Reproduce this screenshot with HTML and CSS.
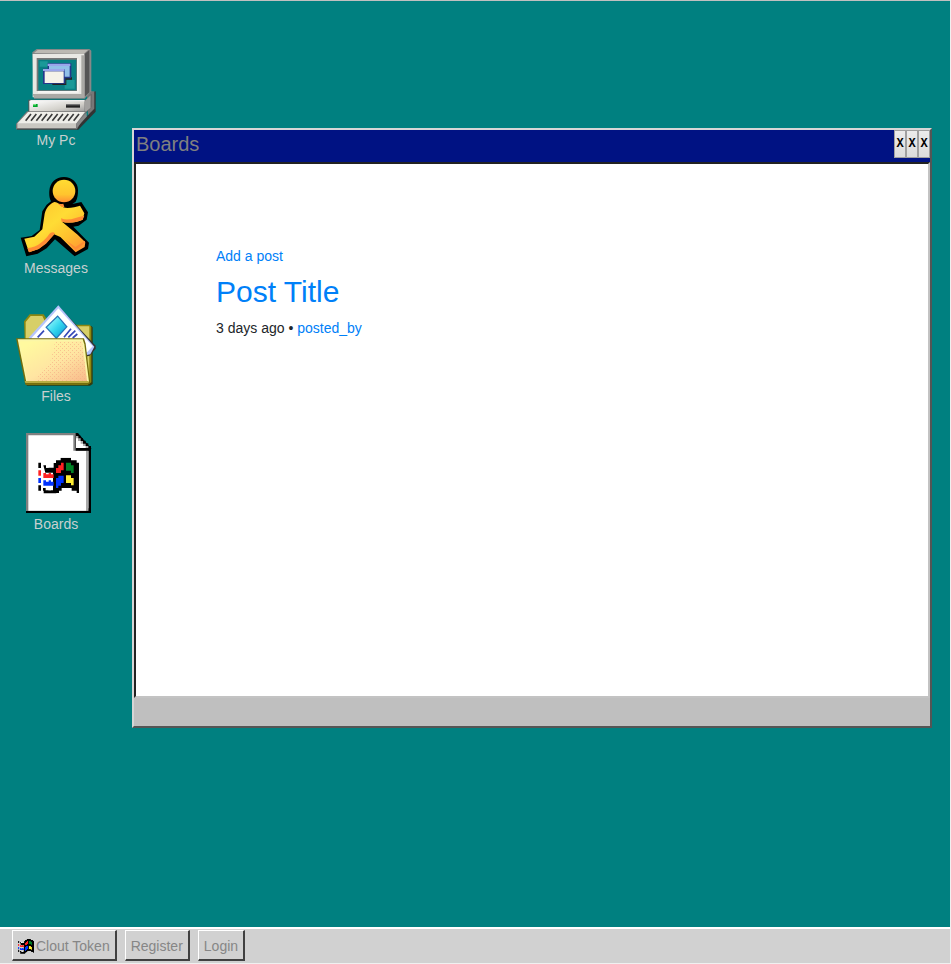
FILE: index.html
```html
<!DOCTYPE html>
<html lang="en">
<head>
<meta charset="utf-8">
<meta name="viewport" content="width=device-width, initial-scale=1">
<title>Boards</title>
<link rel="stylesheet" href="styles.css">
</head>
<body>
<svg class="defs" aria-hidden="true">
  <symbol id="flag" viewBox="90 98 123 107">
    <path fill="#000" d="M91 113h8v16h-8zM91 181h8v16h-8zM106 121h8v7h23v-14h7v-8h14v-8h31v8h17v7h7v91h-7v-7h-15v-8h-30v8h-8v7h-8v7h-38v-14h-2v-8h8v7h22v-53h-23z"/>
    <path fill="#fff" d="M114 121h8v7h-8zM121 189h8v7h-8z"/>
    <path fill="#f22" d="M91 136h8v16h-8zM106 144h8v4h8v-4h7v4h8v11h-31zM144 129h7v-8h8v-8h8v23h-8v8h-15z"/>
    <path fill="#03f" d="M91 159h8v15h-8zM106 166h8v4h8v-4h7v4h8v12h-31zM144 159h7v-7h16v22h-8v8h-8v7h-7z"/>
    <path fill="#008226" d="M174 113h15v8h8v23h-8v-7h-15z"/>
    <path fill="#fe3" d="M174 151h15v8h8v22h-8v-7h-15z"/>
  </symbol>
</svg>

<main class="desktop">
  <nav class="shortcuts" aria-label="Desktop">
    <a class="shortcut" href="#my-pc">
      <svg class="shortcut-icon" viewBox="24 27 240 243" aria-hidden="true">
        <defs>
          <linearGradient id="metal" x2="1" y2="1"><stop offset="0" stop-color="#fff"/><stop offset=".6" stop-color="#d4d2cc"/><stop offset="1" stop-color="#999"/></linearGradient>
        </defs>
        <path fill="#333" d="M245 160l18-6v61l-52 54H27v-7l180-3 37-38z"/>
        <path fill="#777" d="M237 164l8-10h14v52l-19 19z"/>
        <path fill="#888" d="M73 37l13-10h158l6 5v122l-20 22H78z"/>
        <path fill="#bcb9b3" d="M78 39l11-9h151l-13 12z"/>
        <path fill="#555" d="M229 43l15-13v127l-15 14z"/>
        <path fill="#e9e8e4" d="M74 42h155v130H74z"/>
        <path fill="#aaa9a5" d="M74 162h155v11H78zM220 46h9v120h-9z"/>
        <path fill="#777" d="M86 54h121v99H86z"/>
        <path fill="#f6f6f3" d="M207 56h5v102H90v-5h117z"/>
        <path fill="#087f83" d="M91 59h114v92H91z"/>
        <path fill="#1a9998" d="M95 64h24v16H95zM170 120h30v26h-30z"/>
        <path fill="#24378c" d="M119 70h71v46h-18v16h-67V86h14z"/>
        <path fill="#91bfe8" d="M123 78h62v32h-15V88h-47z"/>
        <path fill="#9aa5eb" d="M119 71h68v7h-68zM105 87h64v6h-64z"/>
        <path fill="#f5f2e9" d="M110 94h57v35h-57z"/>
        <path fill="#222" d="M133 131h39v-16h17v-3h3v7h-17v16h-42z"/>
        <path fill="#555" d="M61 179h174l15-17v40l-20 20H61z"/>
        <path fill="url(#metal)" d="M64 182h166v35H64z"/>
        <path fill="#a2a19f" d="M230 183l18-18v38l-18 16z"/>
        <path fill="#eee" d="M67 180h163v4H67z"/>
        <path fill="#00a62a" d="M75 192h14v9H75z"/>
        <path fill="#6ce47e" d="M75 192h9v4h-9z"/>
        <path fill="#222" d="M174 192h42v11h-42z"/>
        <path fill="#777" d="M174 192h42v4h-42z"/>
        <path fill="#777" d="M57 214h180l-30 54H24v-17z"/>
        <path fill="#efeee9" d="M60 216h171l-27 35H27z"/>
        <path fill="#c9c7c1" d="M28 252h176v12H28z"/>
        <path fill="#888" d="M205 251l31-33v12l-30 33z"/>
        <path stroke="#3a3a3a" stroke-width="5" d="M69 222l-16 20M85 222l-16 20M101 222l-16 20M117 222l-16 20M133 222l-16 20M149 222l-16 20M165 222l-16 20M181 222l-16 20M197 222l-16 20M213 222l-16 20"/>
      </svg>
      <span class="shortcut-label">My Pc</span>
    </a>
    <a class="shortcut" href="#messages">
      <svg class="shortcut-icon" viewBox="24 21 240 243" aria-hidden="true">
        <defs>
          <linearGradient id="body" x2="1" y2="1"><stop offset="0" stop-color="#ffc02b"/><stop offset=".45" stop-color="#ffdc35"/><stop offset=".7" stop-color="#ffc02e"/><stop offset="1" stop-color="#ff8e35"/></linearGradient>
          <linearGradient id="head" x2="0" y2="1"><stop offset="0" stop-color="#ffdc32"/><stop offset=".65" stop-color="#ffc52e"/><stop offset="1" stop-color="#ff8f35"/></linearGradient>
        </defs>
        <path fill="#000" d="M168 21c24 0 42 17 42 39 0 13-1 24-7 35l-10 7 27-6 20 31-4 22-24 18-16 3 47 48-3 19-40 22-59-51-25 27-27 16-34 8-17-56 33-5 24-18 8-56 13-20 13-10c-5-9-6-20-5-32 2-24 19-41 44-41z"/>
        <circle cx="168" cy="63" r="34" fill="url(#head)"/>
        <path fill="url(#body)" d="M139 96c13 1 19 11 27 16 16 5 37-2 50-5l13 23-5 19c-20 9-44 11-62 6l47 39 23 23-2 14-27 16-46-46-19-8-24 26-22 18-29 10-14-41 30-6 24-22 7-47c5-18 15-29 29-35z"/>
        <path fill="#ff8c35" d="M58 235c33-4 52-24 66-43 5-6 11-8 17-2l-3 4-24 27-22 16-29 10zM159 145c23 10 47-4 70-8l-5 12c-21 9-44 12-63 6zM202 231l29-19v6l-28 23-31-32zM139 96c7 5 17 7 27 5l3 10h-7c-7-6-13-12-23-15z"/>
      </svg>
      <span class="shortcut-label">Messages</span>
    </a>
    <a class="shortcut" href="#files">
      <svg class="shortcut-icon" viewBox="24 21 240 243" aria-hidden="true">
        <defs>
          <linearGradient id="folder" x2="1" y2="1"><stop offset=".1" stop-color="#fff99f"/><stop offset=".55" stop-color="#ffe5a2"/><stop offset="1" stop-color="#f8b98a"/></linearGradient>
          <linearGradient id="picture" x2="1" y2="1"><stop offset="0" stop-color="#b1ffff"/><stop offset=".5" stop-color="#38d8ef"/><stop offset="1" stop-color="#0099d4"/></linearGradient>
          <pattern id="grain" width="12" height="12" patternUnits="userSpaceOnUse"><path fill="#f5ac86" d="M0 0h3v3H0zM6 6h3v3H6z"/></pattern>
        </defs>
        <path fill="#333b0c" d="M249 83l5 5v170l-8 5H57l-5-7z"/>
        <path fill="#8d8710" d="M48 70l17-21h42l9 14 21 17h108l5 7v166l-12 8H55z"/>
        <path fill="#d7cf68" d="M53 72l15-18h35l7 14 22 17h112v160H53z"/>
        <path fill="#333" d="M151 24l112 119v9l-18 21-33 8z"/>
        <path fill="#b5c4fc" d="M151 22L62 119l65 75 120-25 12-23z"/>
        <path fill="#fff" d="M151 31L70 121l60 58 108-17 16-17z"/>
        <path fill="#2476b8" d="M149 52l30 34-34 38-33-36z"/>
        <path fill="url(#picture)" d="M149 57l25 29-29 32-28-30z"/>
        <path stroke="#3548b6" stroke-width="5" d="M89 118l19-20M168 118l21-26M181 118l21-20M194 120l14-12"/>
        <path fill="#756d0c" d="M24 121h204l5 16 14 118-9 5H52z"/>
        <path fill="#fbf6a8" d="M29 124h195l5 15 14 113H55z"/>
        <path fill="url(#folder)" d="M34 130h188l15 120H58z"/>
        <path fill="url(#grain)" opacity=".65" d="M141 132h81l15 118H83l20-37 22-12z"/>
        <path fill="#b8ad42" d="M50 249h192v6H52z"/>
      </svg>
      <span class="shortcut-label">Files</span>
    </a>
    <a class="shortcut" href="#boards">
      <svg class="shortcut-icon" viewBox="24 24 240 243" aria-hidden="true">
        <path fill="#000" d="M54 24h156l39 46v194H54z"/>
        <path fill="#808080" d="M54 24h150v47h37v187H54z"/>
        <path fill="#fff" d="M61 31h135v46h45v173h-7v7H61z"/>
        <path fill="#aaa" d="M234 77h7v180h-7z"/>
        <path fill="#000" d="M203 24h7v8h8v7h7v8h8v8h8v8h8v14h-46z"/>
        <path fill="#aaa" d="M204 33h7v7h7v8h7v8h8v7h8v6h-37z"/>
        <path fill="#fff" d="M204 40h6v8h8v8h7v7h8v6h-29z"/>
        <use href="#flag" x="90" y="98" width="123" height="107"/>
      </svg>
      <span class="shortcut-label">Boards</span>
    </a>
  </nav>

  <section class="window" aria-labelledby="window-title">
    <header class="titlebar">
      <h1 class="window-title" id="window-title">Boards</h1>
      <div class="window-controls">
        <button class="control" type="button" aria-label="Minimize">X</button>
        <button class="control" type="button" aria-label="Maximize">X</button>
        <button class="control" type="button" aria-label="Close">X</button>
      </div>
    </header>
    <div class="window-content">
      <a class="add-post" href="#add">Add a post</a>
      <article class="post">
        <h2 class="post-title"><a href="#post">Post Title</a></h2>
        <p class="post-meta">3 days ago • <a href="#user">posted_by</a></p>
      </article>
    </div>
    <footer class="statusbar"></footer>
  </section>
</main>

<nav class="taskbar" aria-label="Taskbar">
  <button class="task" type="button"><svg class="task-icon" aria-hidden="true"><use href="#flag"/></svg>Clout Token</button>
  <button class="task" type="button">Register</button>
  <button class="task" type="button">Login</button>
</nav>
</body>
</html>
```

FILE: styles.css
```css
* {
  box-sizing: border-box;
}

html {
  background: #f0f0f0;
}

body {
  display: flex;
  flex-direction: column;
  min-height: 100vh;
  margin: 0;
  padding: 0 1px 1px 0;
  font: 14px/24px "Liberation Sans", Arial, sans-serif;
  color: #212529;
}

a {
  color: #0080f8;
  text-decoration: none;
}

h1,
h2,
p {
  margin: 0;
  font-weight: 400;
}

.defs {
  display: none;
}

.desktop {
  display: flex;
  flex: 1;
  align-items: flex-start;
  gap: 20px;
  padding-right: 18px;
  border-top: 1px solid #c0c0c0;
  background: #008080;
}

.shortcuts {
  display: flex;
  flex-direction: column;
  flex: none;
  gap: 27px;
  width: 112px;
  padding-top: 48px;
}

.shortcut {
  display: flex;
  flex-direction: column;
  align-items: center;
  line-height: 20px;
  color: #c8d0d0;
}

.shortcut-icon {
  width: 80px;
  height: 81px;
}

.window {
  display: flex;
  flex: 1;
  flex-direction: column;
  min-width: 0;
  min-height: 600px;
  margin-top: 127px;
  border: 2px solid;
  border-color: #d6d6d6 #555 #555 #d6d6d6;
  background: #bfbfbf;
}

.titlebar {
  display: flex;
  align-items: flex-start;
  justify-content: space-between;
  height: 32px;
  padding-left: 2px;
  background: #001283;
}

.window-title {
  font-size: 20px;
  line-height: 28px;
  color: #808080;
}

.window-controls {
  display: flex;
}

.control {
  width: 12px;
  height: 28px;
  padding: 0;
  border: 1px solid #a0a0a0;
  background: linear-gradient(#ececec, #dcdcdc);
  font: bold 12px/24px "Liberation Mono", monospace;
  color: #000;
}

.window-content {
  flex: 1;
  padding: 80px;
  border: 2px solid;
  border-color: #222 #c3c3c3 #c3c3c3 #222;
  background: #fff;
}

.post-title {
  margin: 8px 0;
  font-size: 30px;
  line-height: 32px;
}

.statusbar {
  height: 28px;
}

.taskbar {
  display: flex;
  gap: 8px;
  padding: 1px 12px 2px;
  border-top: 2px solid #fff;
  background: #d1d1d1;
}

.task {
  display: flex;
  align-items: center;
  gap: 2px;
  height: 31px;
  padding: 2px 5px 0;
  border: solid;
  border-width: 1px 2px 2px 1px;
  border-color: #fff #404040 #404040 #fff;
  background: #d1d1d1;
  font: inherit;
  color: #868686;
}

.task-icon {
  width: 16px;
  height: 16px;
}
```
